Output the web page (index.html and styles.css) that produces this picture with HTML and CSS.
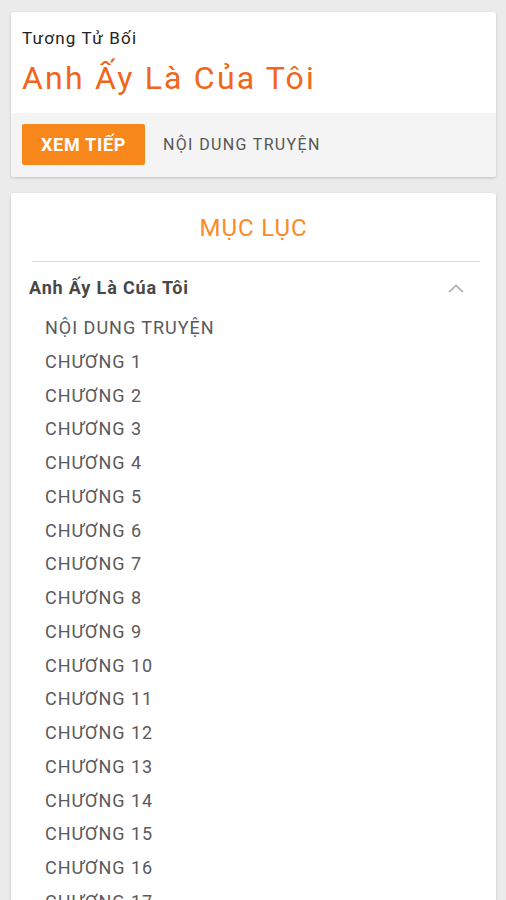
FILE: index.html
```html
<!DOCTYPE html>
<html lang="vi">
<head>
  <meta charset="UTF-8" />
  <meta name="viewport" content="width=device-width, initial-scale=1.0"/>
  <title>Anh Ấy Là Của Tôi - Tương Tử Bối</title>
  <link rel="stylesheet" href="styles.css">
</head>
<body>

<div class="card story-card">
  <div class="story-head">
    <div class="author">Tương Tử Bối</div>
    <h1 class="story-title">Anh Ấy Là Của Tôi</h1>
  </div>
  <div class="story-actions">
    <button class="btn-next">XEM TIẾP</button>
    <a class="link-summary" href="#">NỘI DUNG TRUYỆN</a>
  </div>
</div>

<div class="card toc-card">
  <h2 class="toc-title">MỤC LỤC</h2>
  <div class="toc-divider"></div>
  <div class="toc-group">
    <span>Anh Ấy Là Cúa Tôi</span>
    <svg class="chevron" width="16" height="9" viewBox="0 0 16 9">
      <path d="M1 8 L8 1.5 L15 8" fill="none" stroke="#b9b9b9" stroke-width="2"/>
    </svg>
  </div>
  <ul class="toc-list">
    <li>NỘI DUNG TRUYỆN</li>
    <li>CHƯƠNG 1</li>
    <li>CHƯƠNG 2</li>
    <li>CHƯƠNG 3</li>
    <li>CHƯƠNG 4</li>
    <li>CHƯƠNG 5</li>
    <li>CHƯƠNG 6</li>
    <li>CHƯƠNG 7</li>
    <li>CHƯƠNG 8</li>
    <li>CHƯƠNG 9</li>
    <li>CHƯƠNG 10</li>
    <li>CHƯƠNG 11</li>
    <li>CHƯƠNG 12</li>
    <li>CHƯƠNG 13</li>
    <li>CHƯƠNG 14</li>
    <li>CHƯƠNG 15</li>
    <li>CHƯƠNG 16</li>
    <li>CHƯƠNG 17</li>
  </ul>
</div>

</body>
</html>
```

FILE: styles.css
```css
body {
  margin: 0;
  padding: 12px 10px 0 11px;
  background: #ebebeb;
  font-family: Roboto, "Noto Sans", sans-serif;
  color: #555;
  height: 888px;
  overflow: hidden;
}

.card {
  background: #fff;
  border-radius: 3px;
  box-shadow: 0 1px 3px rgba(0,0,0,0.18);
  overflow: hidden;
}

.story-head {
  padding: 16px 11px 16px 11px;
}

.author {
  font-size: 17px;
  line-height: 20px;
  letter-spacing: 1.2px;
  color: #222;
}

.story-title {
  margin: 11px 0 0;
  font-size: 32px;
  line-height: 38px;
  font-weight: 400;
  letter-spacing: 2.2px;
  color: #f0661c;
}

.story-actions {
  background: #f4f4f4;
  padding: 11px 11px 12px;
  display: flex;
  align-items: center;
  gap: 18px;
}

.btn-next {
  width: 123px;
  height: 41px;
  border: none;
  border-radius: 2px;
  background: #f8881c;
  color: #fff;
  font-family: Roboto, sans-serif;
  font-size: 18px;
  font-weight: 700;
  letter-spacing: 0.7px;
  padding: 0;
}

.link-summary {
  color: #555;
  font-size: 16px;
  letter-spacing: 1.35px;
  text-decoration: none;
}

.toc-card {
  margin-top: 16px;
  height: 800px;
}

.toc-title {
  margin: 0;
  padding-top: 21px;
  text-align: center;
  font-size: 24px;
  line-height: 28px;
  font-weight: 400;
  letter-spacing: 0.9px;
  color: #f98b28;
}

.toc-divider {
  margin: 19px 16px 0 21px;
  height: 1px;
  background: #dcdcdc;
}

.toc-group {
  margin-top: 7px;
  padding: 0 32px 0 18px;
  height: 36px;
  display: flex;
  align-items: center;
  justify-content: space-between;
  font-size: 18px;
  font-weight: 700;
  letter-spacing: 0.85px;
  color: #484848;
}

.chevron {
  margin-top: 3px;
}

.toc-list {
  list-style: none;
  margin: 6px 0 0;
  padding: 0 0 0 34px;
}

.toc-list li {
  font-size: 18px;
  line-height: 33.75px;
  letter-spacing: 1px;
  color: #5a5a5a;
}
```
